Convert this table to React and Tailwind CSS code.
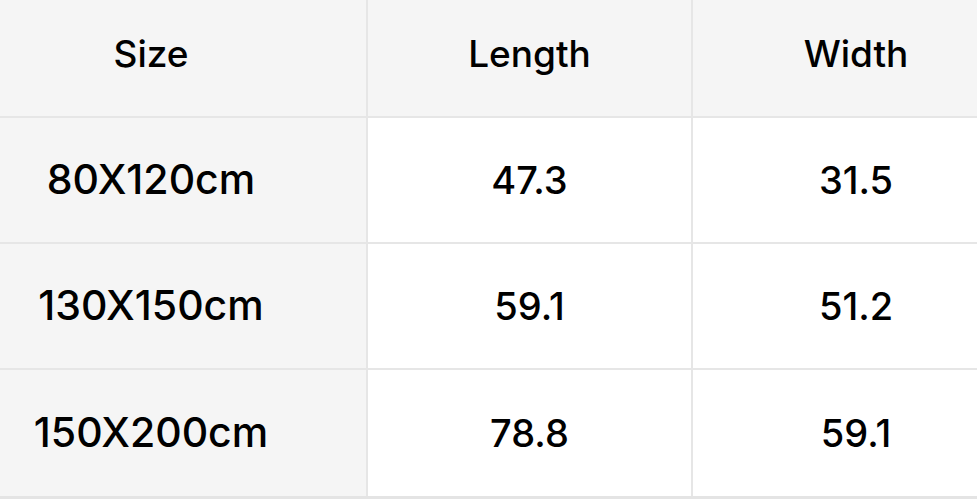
const rows = [
  ["80X120cm", "47.3", "31.5"],
  ["130X150cm", "59.1", "51.2"],
  ["150X200cm", "78.8", "59.1"],
];

export default function App() {
  return (
    <div className="h-[499px] w-[977px] overflow-hidden bg-white font-['Inter','Noto_Sans',sans-serif] font-medium text-black">
      <div className="grid grid-cols-[368px_325px_284px] border-b-[3px] border-[#e4e4e4]">
        <div className="flex h-[118px] items-center justify-center border-b-2 border-r-2 border-[#e6e6e6] bg-[#f5f5f5] pb-[8px] pr-[64px] text-[37px]">
          Size
        </div>
        <div className="flex h-[118px] items-center justify-center border-b-2 border-r-2 border-[#e6e6e6] bg-[#f5f5f5] pb-[8px] text-[37px]">
          Length
        </div>
        <div className="flex h-[118px] items-center justify-center border-b-2 border-[#e6e6e6] bg-[#f5f5f5] pb-[8px] pl-[42px] text-[37px]">
          Width
        </div>
        {rows.map((r, i) => (
          <div key={i} className="contents">
            <div
              className={`flex h-[126px] items-center justify-center border-r-2 border-[#e6e6e6] bg-[#f5f5f5] pr-[64px] text-[41px] ${i < 2 ? "border-b-2" : ""}`}
            >
              {r[0]}
            </div>
            <div
              className={`flex h-[126px] items-center justify-center border-r-2 border-[#e6e6e6] text-[38px] ${i < 2 ? "border-b-2" : ""}`}
            >
              {r[1]}
            </div>
            <div
              className={`flex h-[126px] items-center justify-center border-[#e6e6e6] pl-[42px] text-[38px] ${i < 2 ? "border-b-2" : ""}`}
            >
              {r[2]}
            </div>
          </div>
        ))}
      </div>
    </div>
  );
}
